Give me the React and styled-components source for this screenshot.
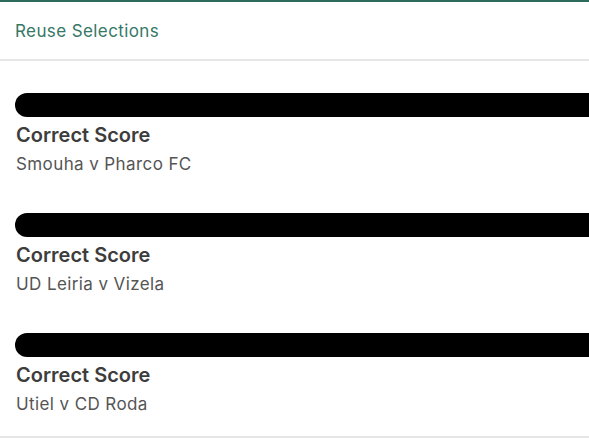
import React from "react";
import styled, { createGlobalStyle } from "styled-components";

const Global = createGlobalStyle`
  html, body { margin: 0; padding: 0; background: #fff; }
  body { font-family: Inter, "Noto Sans", sans-serif; -webkit-font-smoothing: antialiased; }
`;

const Page = styled.div`
  width: 589px;
  height: 438px;
  overflow: hidden;
  background: #fff;
  border-top: 2px solid #2f6b5a;
  box-sizing: border-box;
`;

const Header = styled.div`
  height: 57px;
  display: flex;
  align-items: center;
  padding-left: 15px;
  border-bottom: 2px solid #e6e6e6;
  color: #357866;
  font-size: 17px;
  letter-spacing: 0.4px;
  font-weight: 400;
`;

const List = styled.div`
  display: flex;
  flex-direction: column;
`;

const Item = styled.div`
  display: flex;
  flex-direction: column;
  padding: 32px 0 0 15px;
  height: 120px;
  box-sizing: border-box;
  &:last-child {
    height: 137px;
    border-bottom: 2px solid #e6e6e6;
  }
`;

const Redaction = styled.div`
  height: 24px;
  background: #000;
  border-radius: 12px 0 0 12px;
`;

const Title = styled.div`
  margin-top: 6px;
  font-size: 20px;
  line-height: 24px;
  font-weight: 600;
  color: #3d3d3d;
  padding-left: 1px;
`;

const Sub = styled.div`
  margin-top: 5px;
  font-size: 17px;
  letter-spacing: 0.4px;
  line-height: 24px;
  color: #555;
  padding-left: 1px;
`;

const items = [
  "Smouha v Pharco FC",
  "UD Leiria v Vizela",
  "Utiel v CD Roda",
];

export default function App() {
  return (
    <>
      <Global />
      <Page>
        <Header>Reuse Selections</Header>
        <List>
          {items.map((m) => (
            <Item key={m}>
              <Redaction />
              <Title>Correct Score</Title>
              <Sub>{m}</Sub>
            </Item>
          ))}
        </List>
      </Page>
    </>
  );
}
